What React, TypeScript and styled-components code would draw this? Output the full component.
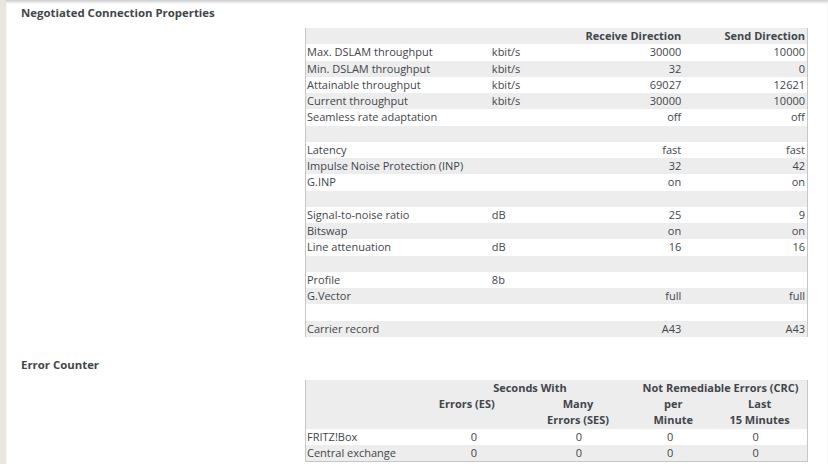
import React from 'react';
import styled, { createGlobalStyle } from 'styled-components';

const Global = createGlobalStyle`
  html, body { margin: 0; padding: 0; background: #fff; }
  body { font-family: "Open Sans", "Noto Sans", sans-serif; color: #3f464c; }
`;

const Page = styled.div`
  width: 828px;
  height: 464px;
  box-sizing: border-box;
  border-left: 6px solid #e9e6e0;
  box-shadow: inset 0 3px 3px -1px rgba(0, 0, 0, 0.2);
  padding-top: 5px;
  overflow: hidden;
`;

const SectionTitle = styled.h2<{ $gap?: number }>`
  margin: ${(p) => p.$gap ?? 0}px 0 0 0;
  padding-left: 15px;
  font-size: 11.4px;
  font-weight: 700;
  line-height: 16px;
  color: #3f464c;
`;

const DataTable = styled.table<{ $bottom?: boolean }>`
  margin: 7px 0 0 299px;
  width: 503px;
  border-collapse: collapse;
  table-layout: fixed;
  border-left: 1px solid #c6c6c6;
  border-right: 1px solid #c6c6c6;
  border-bottom: ${(p) => (p.$bottom ? '1px solid #c6c6c6' : 'none')};
`;

const Row = styled.tr<{ $shade: boolean }>`
  background: ${(p) => (p.$shade ? '#ededed' : '#ffffff')};
`;

const Cell = styled.td<{ $align?: 'left' | 'right' | 'center'; $bold?: boolean; $pl?: number; $pr?: number }>`
  padding: 0 ${(p) => p.$pr ?? 2}px 0 ${(p) => p.$pl ?? 2}px;
  height: 16.25px;
  line-height: 16.25px;
  font-size: 11px;
  font-weight: ${(p) => (p.$bold ? 700 : 400)};
  white-space: nowrap;
  vertical-align: top;
  text-align: ${(p) => p.$align ?? 'left'};
  color: #3f464c;
`;

type PropRow = [string, string, string, string] | null;

const props: PropRow[] = [
  ['Max. DSLAM throughput', 'kbit/s', '30000', '10000'],
  ['Min. DSLAM throughput', 'kbit/s', '32', '0'],
  ['Attainable throughput', 'kbit/s', '69027', '12621'],
  ['Current throughput', 'kbit/s', '30000', '10000'],
  ['Seamless rate adaptation', '', 'off', 'off'],
  null,
  ['Latency', '', 'fast', 'fast'],
  ['Impulse Noise Protection (INP)', '', '32', '42'],
  ['G.INP', '', 'on', 'on'],
  null,
  ['Signal-to-noise ratio', 'dB', '25', '9'],
  ['Bitswap', '', 'on', 'on'],
  ['Line attenuation', 'dB', '16', '16'],
  null,
  ['Profile', '8b', '', ''],
  ['G.Vector', '', 'full', 'full'],
  null,
  ['Carrier record', '', 'A43', 'A43'],
];

const errors = [
  ['FRITZ!Box', '0', '0', '0', '0'],
  ['Central exchange', '0', '0', '0', '0'],
];

const valueShift = [0, 7, 1, -3, -4];

export default function App() {
  return (
    <>
      <Global />
      <Page>
        <SectionTitle>Negotiated Connection Properties</SectionTitle>
        <DataTable>
          <colgroup>
            <col style={{ width: 184 }} />
            <col style={{ width: 70 }} />
            <col style={{ width: 124 }} />
            <col style={{ width: 123 }} />
          </colgroup>
          <thead>
            <Row $shade>
              <Cell as="th" />
              <Cell as="th" />
              <Cell as="th" $align="right" $bold $pr={3}>Receive Direction</Cell>
              <Cell as="th" $align="right" $bold>Send Direction</Cell>
            </Row>
          </thead>
          <tbody>
            {props.map((r, i) => (
              <Row key={i} $shade={i % 2 === 1}>
                {r ? (
                  <>
                    <Cell $pl={1}>{r[0]}</Cell>
                    <Cell>{r[1]}</Cell>
                    <Cell $align="right" $pr={3}>{r[2]}</Cell>
                    <Cell $align="right">{r[3]}</Cell>
                  </>
                ) : (
                  <Cell colSpan={4} />
                )}
              </Row>
            ))}
          </tbody>
        </DataTable>

        <SectionTitle $gap={20}>Error Counter</SectionTitle>
        <DataTable $bottom>
          <colgroup>
            <col style={{ width: 106 }} />
            <col style={{ width: 110 }} />
            <col style={{ width: 112 }} />
            <col style={{ width: 78 }} />
            <col style={{ width: 95 }} />
          </colgroup>
          <thead>
            <Row $shade>
              <Cell as="th" />
              <Cell as="th" colSpan={2} $align="center" $bold $pl={16}>Seconds With</Cell>
              <Cell as="th" colSpan={2} $align="center" $bold>Not Remediable Errors (CRC)</Cell>
            </Row>
            <Row $shade>
              <Cell as="th" style={{ height: 32.5 }} />
              <Cell as="th" $align="center" $bold>Errors (ES)</Cell>
              <Cell as="th" $align="center" $bold>Many<br />Errors (SES)</Cell>
              <Cell as="th" $align="center" $bold>per<br />Minute</Cell>
              <Cell as="th" $align="center" $bold>Last<br />15 Minutes</Cell>
            </Row>
          </thead>
          <tbody>
            {errors.map((r, i) => (
              <Row key={i} $shade={i === 1}>
                <Cell $pl={1}>{r[0]}</Cell>
                {r.slice(1).map((v, j) => (
                  <Cell key={j} $align="center" $pl={2 + Math.max(0, valueShift[j + 1]) * 2} $pr={2 + Math.max(0, -valueShift[j + 1]) * 2}>
                    {v}
                  </Cell>
                ))}
              </Row>
            ))}
          </tbody>
        </DataTable>
      </Page>
    </>
  );
}
